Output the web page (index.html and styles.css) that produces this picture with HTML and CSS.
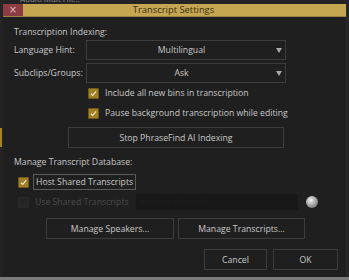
FILE: index.html
```html
<!DOCTYPE html>
<html>
<head>
<meta charset="utf-8">
<link rel="stylesheet" href="styles.css">
</head>
<body>
<div class="top-strip"><span class="behind-text">Audio Mult Hit...</span></div>
<div class="stage">
  <div class="gutter"><div class="gold-mark"></div></div>
  <div class="dialog">
    <div class="titlebar">
      <div class="close">×</div>
      <div class="title">Transcript Settings</div>
    </div>
    <div class="content">
      <div class="section">Transcription Indexing:</div>
      <div class="field-row first">
        <span class="label">Language Hint:</span>
        <div class="select"><span class="select-text">Multilingual</span><span class="arrow"></span></div>
      </div>
      <div class="field-row">
        <span class="label">Subclips/Groups:</span>
        <div class="select"><span class="select-text">Ask</span><span class="arrow"></span></div>
      </div>
      <div class="check-row indent">
        <span class="box checked"><svg viewBox="0 0 12 12"><path d="M2.6 6.3 L5 8.6 L9.5 3.2" /></svg></span>
        <span class="check-label">Include all new bins in transcription</span>
      </div>
      <div class="check-row indent">
        <span class="box checked"><svg viewBox="0 0 12 12"><path d="M2.6 6.3 L5 8.6 L9.5 3.2" /></svg></span>
        <span class="check-label">Pause background transcription while editing</span>
      </div>
      <div class="btn stop">Stop PhraseFind AI Indexing</div>
      <div class="section second">Manage Transcript Database:</div>
      <div class="check-row host">
        <span class="box checked"><svg viewBox="0 0 12 12"><path d="M2.6 6.3 L5 8.6 L9.5 3.2" /></svg></span>
        <span class="check-label focus">Host Shared Transcripts</span>
      </div>
      <div class="check-row use">
        <span class="box disabled"></span>
        <span class="check-label dim">Use Shared Transcripts</span>
        <div class="host-input">No host selected</div>
        <span class="sphere"></span>
      </div>
      <div class="btn-pair">
        <div class="btn speakers">Manage Speakers...</div>
        <div class="btn transcripts">Manage Transcripts...</div>
      </div>
      <div class="footer">
        <div class="btn cancel">Cancel</div>
        <div class="btn ok">OK</div>
      </div>
    </div>
  </div>
</div>
<div class="bottom-line"></div>
</body>
</html>
```
FILE: styles.css
```css
html, body {
  margin: 0;
  padding: 0;
}
body {
  width: 349px;
  height: 280px;
  overflow: hidden;
  background: #262626;
  font-family: "Open Sans", "Lato", sans-serif;
  font-size: 8.7px;
  color: #c9c9c9;
}
.top-strip {
  height: 4px;
  overflow: hidden;
  background: #242424;
}
.behind-text {
  display: block;
  margin-top: -5px;
  margin-left: 20px;
  color: #8a8a8a;
  font-size: 8px;
  line-height: 8px;
}
.stage {
  display: flex;
  height: 273px;
}
.gutter {
  width: 3px;
  background: #242424;
}
.gold-mark {
  margin-top: 124px;
  height: 19px;
  width: 2px;
  background: #a8841f;
}
.dialog {
  width: 343px;
  background: #1f1f1f;
  display: flex;
  flex-direction: column;
  border-right: 1px solid #2c2c2c;
}
.titlebar {
  height: 12px;
  display: flex;
  background: #c6a751;
  border-bottom: 1px solid #9a8240;
}
.close {
  width: 20px;
  background: #8c3c43;
  color: #d7b8ba;
  font-family: "DejaVu Sans", sans-serif;
  font-size: 10px;
  line-height: 12px;
  text-align: center;
}
.title {
  flex: 1;
  text-align: center;
  color: #3b3015;
  font-size: 9.4px;
  line-height: 12px;
  padding-right: 22px;
}
.content {
  padding: 0 0 0 11px;
  display: flex;
  flex-direction: column;
}
.section {
  height: 12px;
  line-height: 12px;
  margin-top: 9px;
}
.section.second {
  margin-top: 8px;
}
.field-row {
  display: flex;
  align-items: center;
  height: 20px;
  margin-top: 3px;
}
.field-row.first {
  margin-top: 2px;
}
.label {
  width: 72px;
}
.select {
  width: 198px;
  height: 18px;
  border: 1px solid #3c3c3c;
  display: flex;
  align-items: center;
}
.select-text {
  flex: 1;
  text-align: center;
}
.arrow {
  width: 0;
  height: 0;
  border-left: 3.5px solid transparent;
  border-right: 3.5px solid transparent;
  border-top: 5px solid #a8a8a8;
  margin-right: 3px;
}
.check-row {
  display: flex;
  align-items: center;
  height: 20px;
}
.check-row.indent {
  padding-left: 74px;
}
.box {
  width: 11px;
  height: 11px;
  box-sizing: border-box;
  border-radius: 1px;
  flex: none;
}
.box.checked {
  background: #a07e22;
  border: 1px solid #6f5a1e;
}
.box svg {
  display: block;
  width: 9px;
  height: 9px;
}
.box svg path {
  fill: none;
  stroke: #efe6cc;
  stroke-width: 1.6;
}
.box.disabled {
  background: #262626;
  border: 1px solid #2a2a2a;
}
.check-label {
  margin-left: 6px;
}
.check-label.focus {
  margin-left: 4px;
  border: 1px solid #5a5a5a;
  padding: 1px 2px;
  line-height: 12px;
}
.check-label.dim {
  color: #4a4a4a;
}
.host {
  margin-top: 4px;
  padding-left: 4px;
}
.use {
  margin-top: 0;
  padding-left: 4px;
}
.host-input {
  margin-left: 7px;
  width: 162px;
  height: 16px;
  background: #181818;
  color: #1d1d1d;
  line-height: 16px;
  padding-left: 4px;
  box-sizing: border-box;
}
.sphere {
  margin-left: 8px;
  width: 12px;
  height: 12px;
  border-radius: 50%;
  background: radial-gradient(circle at 40% 35%, #f2f2f2 0%, #a9a9a9 45%, #555 100%);
}
.btn {
  border: 1px solid #3c3c3c;
  box-sizing: border-box;
  display: flex;
  align-items: center;
  justify-content: center;
  height: 21px;
}
.btn.stop {
  width: 216px;
  margin-left: 54px;
  margin-top: 4px;
}
.btn-pair {
  display: flex;
  margin-top: 6px;
  margin-left: 32px;
  gap: 4px;
}
.btn.speakers {
  width: 128px;
}
.btn.transcripts {
  width: 127px;
}
.footer {
  display: flex;
  justify-content: flex-end;
  gap: 6px;
  margin-top: 10px;
  padding-right: 8px;
}
.btn.cancel {
  width: 63px;
}
.btn.ok {
  width: 65px;
}
.bottom-line {
  height: 3px;
  background: #7c7c7c;
}
```
